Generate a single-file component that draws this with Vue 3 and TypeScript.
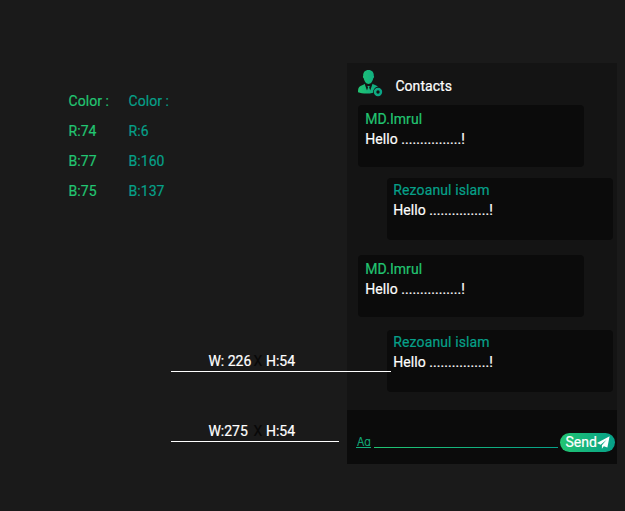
<script setup lang="ts">
interface Message {
  name: string
  text: string
  own: boolean
}

interface Dimension {
  width: string
  height: string
  long: boolean
}

const palettes: string[][] = [
  ['Color :', 'R:74', 'B:77', 'B:75'],
  ['Color :', 'R:6', 'B:160', 'B:137'],
]

const dimensions: Dimension[] = [
  { width: 'W: 226', height: 'H:54', long: true },
  { width: 'W:275', height: 'H:54', long: false },
]

const messages: Message[] = [
  { name: 'MD.Imrul', text: 'Hello ................!', own: false },
  { name: 'Rezoanul islam', text: 'Hello ................!', own: true },
  { name: 'MD.Imrul', text: 'Hello ................!', own: false },
  { name: 'Rezoanul islam', text: 'Hello ................!', own: true },
]
</script>

<template>
  <main class="board">
    <section class="notes">
      <div class="palettes">
        <ul v-for="(palette, i) in palettes" :key="i" class="palette" :class="{ teal: i === 1 }">
          <li v-for="line in palette" :key="line">{{ line }}</li>
        </ul>
      </div>
      <div class="dimensions">
        <div v-for="d in dimensions" :key="d.width" class="dimension" :class="{ long: d.long }">
          <span class="w">{{ d.width }}</span>
          <span class="times">X</span>
          <span>{{ d.height }}</span>
        </div>
      </div>
    </section>

    <section class="chat">
      <header class="head">
        <svg class="contact" width="26" height="28" viewBox="0 0 26 28">
          <defs>
            <linearGradient id="person" x1="0" y1="0" x2="26" y2="0" gradientUnits="userSpaceOnUse">
              <stop offset="0" stop-color="#22c572" />
              <stop offset="1" stop-color="#06a089" />
            </linearGradient>
          </defs>
          <g fill="url(#person)">
            <path d="M10.5 0C14 0 16 2.3 15.8 5.8C16.4 6.5 16 8 15.3 8.3C14.8 10.5 13.9 12 13.2 12.8C12 14.3 9 14.3 7.8 12.8C7.1 12 6.2 10.5 5.7 8.3C5 8 4.6 6.5 5.2 5.8C5 2.3 7 0 10.5 0Z" />
            <path d="M6.6 13.7L9 20.5L10 17.4L9.4 16H11.8L11.2 17.4L12.2 20.5L14.6 13.7C15.8 14.8 18.3 15.1 20 16.5C16.7 17.3 15 19.4 15.1 22.7C10.5 24 4 23.8 0 22.2C0 18.8 .4 17 2.5 15.9C4 15.1 5.7 14.7 6.6 13.7Z" />
            <path fill-rule="evenodd" d="M20 17.8A4.2 4.2 0 1 1 20 26.2A4.2 4.2 0 1 1 20 17.8ZM20 20.3A1.7 1.7 0 1 0 20 23.7A1.7 1.7 0 1 0 20 20.3Z" />
          </g>
        </svg>
        <h1>Contacts</h1>
      </header>

      <div class="messages">
        <article v-for="(m, i) in messages" :key="i" class="message" :class="{ own: m.own }">
          <h2>{{ m.name }}</h2>
          <p>{{ m.text }}</p>
        </article>
      </div>

      <footer class="composer">
        <span class="format">Aa</span>
        <span class="field"></span>
        <button class="send" type="button">
          <span>Send</span>
          <svg width="13" height="13" viewBox="0 0 13 13" fill="#fff">
            <path d="M12.6 .3L0 7L3.6 8.7L9.6 3.8L4.9 9.2V12.8L6.8 10.3L10.4 11.6Z" />
          </svg>
        </button>
      </footer>
    </section>
  </main>
</template>

<style>
body {
  margin: 0;
  background: #1a1a1a;
}
</style>

<style scoped>
.board {
  display: grid;
  grid-template-columns: 347px 270px;
  width: 625px;
  height: 511px;
  overflow: hidden;
  box-sizing: border-box;
  background: #1a1a1a;
  color: #fff;
  font: 14px/20px Roboto, "Liberation Sans", sans-serif;
  letter-spacing: 0.06px;
  -webkit-text-stroke: 0.2px;
}

.notes {
  position: relative;
  z-index: 1;
  padding-top: 86px;
}

.palettes {
  display: flex;
  margin-left: 68.5px;
}

.palette {
  width: 60px;
  margin: 0;
  padding: 0;
  list-style: none;
  line-height: 30px;
  color: #22c572;
}

.palette.teal {
  color: #06a089;
}

.dimensions {
  display: grid;
  gap: 49px;
  margin: 145px 0 0 171px;
}

.dimension {
  display: flex;
  box-sizing: border-box;
  width: 168px;
  height: 21px;
  padding-left: 37.4px;
  border-bottom: 1px solid #fff;
  letter-spacing: 0;
}

.dimension.long {
  width: 220px;
}

.w {
  width: 45px;
  white-space: nowrap;
}

.times {
  width: 12.6px;
  color: #080808;
}

.chat {
  display: flex;
  flex-direction: column;
  height: 401px;
  margin-top: 63px;
  background: #141414;
}

.head {
  display: flex;
  height: 42px;
  padding-left: 11px;
}

.contact {
  margin-top: 7px;
}

h1 {
  margin: 13px 0 0 11.4px;
  font-size: 14px;
  font-weight: 400;
  line-height: 20px;
}

.messages {
  display: grid;
  grid-template-rows: 73px 77px 75px 80px;
  height: 305px;
  padding-left: 11px;
}

.message {
  box-sizing: border-box;
  width: 226px;
  height: 62px;
  padding: 4px 7.3px;
  border-radius: 4px;
  background: #0b0b0b;
}

.message.own {
  margin-left: 29px;
  padding: 2px 6.3px;
}

h2,
p {
  margin: 0;
  font-size: 14px;
  font-weight: 400;
  line-height: 20px;
}

h2 {
  color: #22c572;
}

.own h2 {
  color: #06a089;
  letter-spacing: 0.12px;
}

.composer {
  display: flex;
  align-items: flex-start;
  flex: 1;
  padding: 23px 2px 0 9px;
  background: #0b0b0b;
}

.format {
  box-sizing: border-box;
  width: 15px;
  height: 15px;
  padding-left: 1px;
  border-bottom: 1px solid #13b07e;
  color: #13b07e;
  font: 300 11px/18px Inter, sans-serif;
  font-feature-settings: "cv11";
  letter-spacing: 0;
}

.field {
  width: 184px;
  height: 1px;
  margin: 14px 2px 0 3px;
  background: linear-gradient(90deg, #22c572, #06a089);
}

.send {
  display: flex;
  align-items: center;
  box-sizing: border-box;
  width: 55px;
  height: 19px;
  padding: 0 0 0 5.5px;
  border: 0;
  border-radius: 10px;
  background: linear-gradient(90deg, #22c572, #06a089);
  color: #fff;
  font: 14px/19px Roboto, "Liberation Sans", sans-serif;
}
</style>
